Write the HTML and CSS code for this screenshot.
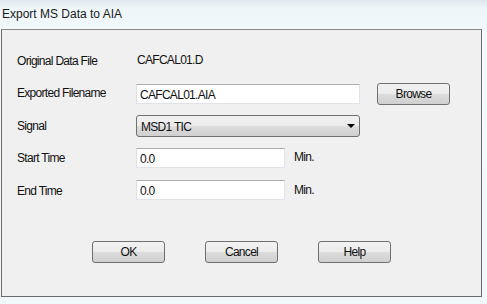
FILE: index.html
```html
<!DOCTYPE html>
<html lang="en">
<head>
    <meta charset="UTF-8">
    <title>Export MS Data to AIA</title>
    <link rel="stylesheet" href="styles.css">
</head>
<body>
    <div class="window">
        <div class="titlebar">Export MS Data to AIA</div>
        <div class="client">
            <div class="form">
                <div class="label">Original Data File</div>
                <div class="value">CAFCAL01.D</div>
                <div></div>

                <div class="label">Exported Filename</div>
                <div class="field wide">CAFCAL01.AIA</div>
                <div><span class="btn browse">Browse</span></div>

                <div class="label">Signal</div>
                <div class="combo">MSD1 TIC<span class="arrow"></span></div>
                <div></div>

                <div class="label">Start Time</div>
                <div class="short-row"><span class="field short">0.0</span><span class="unit">Min.</span></div>
                <div></div>

                <div class="label">End Time</div>
                <div class="short-row"><span class="field short">0.0</span><span class="unit">Min.</span></div>
                <div></div>
            </div>

            <div class="buttons">
                <span class="btn">OK</span>
                <span class="btn">Cancel</span>
                <span class="btn">Help</span>
            </div>
        </div>
    </div>
</body>
</html>
```

FILE: styles.css
```css
body {
    margin: 0;
    width: 487px;
    height: 304px;
    overflow: hidden;
    font-family: 'Liberation Sans', Arial, sans-serif;
    color: #000;
    background: linear-gradient(180deg, #dfe7ee 0px, #eef6fa 8px, #f4fafc 40px, #f2f9fb 100%);
}

.window {
    height: 304px;
}

.titlebar {
    height: 29px;
    box-sizing: border-box;
    padding: 7px 0 0 2px;
    font-size: 12px;
    color: #1a1a1a;
}

.client {
    margin: 0 5px 0 1px;
    height: 268px;
    box-sizing: border-box;
    border: 1px solid #6b6b6b;
    border-top-color: #8a8a8a;
    background: #f0f0f0;
    padding: 14px 0 0 15px;
    font-size: 12px;
    letter-spacing: -0.7px;
    color: #111;
}

/* form grid */
.form {
    display: grid;
    grid-template-columns: 119px 224px 89px;
    grid-template-rows: 32px 33px 32px 33px 32px;
    align-items: center;
}

.label {
    padding-top: 1px;
}

.value {
    padding-left: 1px;
}

.field {
    display: block;
    box-sizing: border-box;
    height: 20px;
    padding: 3px 0 0 3px;
    background: #fff;
    border: 1px solid #e2e3ea;
    border-top-color: #abadb3;
    border-left-color: #dbdfe6;
}

.wide {
    width: 224px;
    margin-top: 2px;
}

.short-row {
    display: flex;
    align-items: center;
}

.short {
    width: 149px;
}

.unit {
    margin-left: 9px;
    margin-top: -1px;
}

.combo {
    position: relative;
    box-sizing: border-box;
    height: 22px;
    margin-top: 1px;
    padding: 4px 0 0 4px;
    border: 1px solid #707070;
    border-radius: 3px;
    background: linear-gradient(180deg, #f2f2f2 0%, #ebebeb 50%, #dddddd 51%, #cfcfcf 100%);
}

.arrow {
    position: absolute;
    right: 4px;
    top: 8px;
    width: 0;
    height: 0;
    border-left: 4px solid transparent;
    border-right: 4px solid transparent;
    border-top: 4px solid #000;
}

.btn {
    display: inline-flex;
    align-items: center;
    justify-content: center;
    box-sizing: border-box;
    width: 73px;
    height: 22px;
    border: 1px solid #707070;
    border-radius: 3px;
    background: linear-gradient(180deg, #f2f2f2 0%, #ebebeb 50%, #dddddd 51%, #cfcfcf 100%);
}

.browse {
    margin: 3px 0 0 17px;
}

.buttons {
    display: flex;
    justify-content: center;
    gap: 40px;
    margin: 35px 15px 0 0;
}
```
